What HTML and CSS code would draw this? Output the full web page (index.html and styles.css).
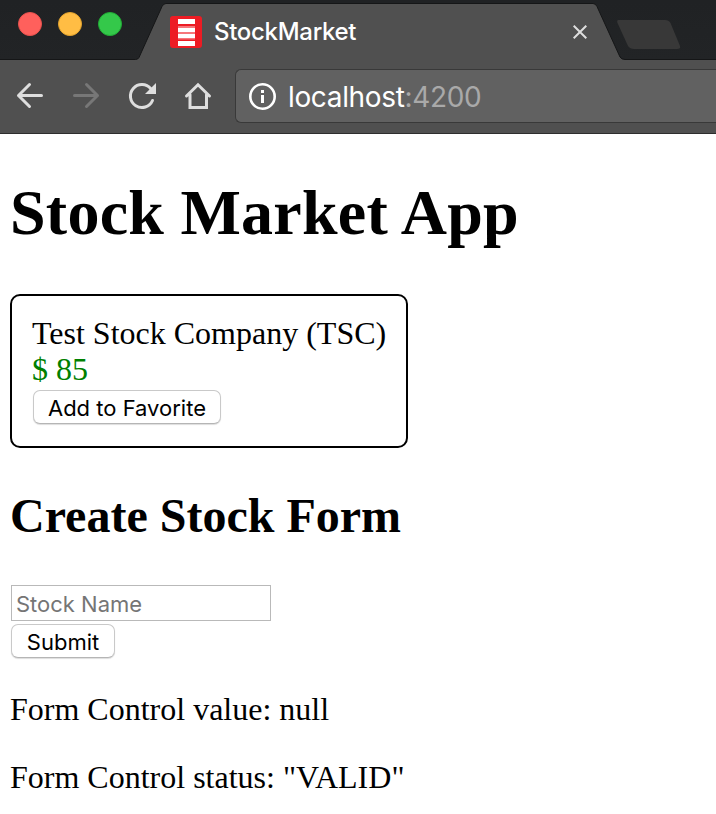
FILE: index.html
```html
<!DOCTYPE html>
<html lang="en">
<head>
<meta charset="utf-8">
<title>StockMarket</title>
<link rel="stylesheet" href="styles.css">
</head>
<body>
<header class="chrome">
  <div class="tabstrip">
    <svg class="tab-shape" width="716" height="60" viewBox="0 0 716 60" aria-hidden="true">
      <path d="M-1 61V59.500H135.500Q138 59.500 139 57.500L162 6.500Q163.500 3.500 166 3.500H593Q595.500 3.500 597 6.500L620 57Q621.500 59.500 625 59.500H717V61" fill="#505050" stroke="#151617"/>
      <path d="M618.500 20H665Q669 20 670.500 23L680 46Q681 49 677 49H634Q630 49 628 46L617.500 23Q616.500 20 618.500 20Z" fill="#383838"/>
    </svg>
    <div class="lights"><i class="light red"></i><i class="light yellow"></i><i class="light green"></i></div>
    <div class="tab">
      <svg class="favicon" width="32" height="32" viewBox="0 0 32 32"><rect width="32" height="32" rx="3" fill="#ed1c24"/><path fill="#fff" d="M8 3h17v5H8zM8 12h17v4H8zM8 18h17v4H8zM8 25h17v5H8z"/><path fill="#f6777b" d="M8 10h17v2H8zM8 16h17v2H8zM8 22h17v1.500H8z"/></svg>
      <span class="tab-title">StockMarket</span>
      <svg class="close" width="14" height="14" viewBox="0 0 14 14"><path d="M.7.700 13.300 13.300M13.300.700.700 13.300" stroke="#dedede" stroke-width="2"/></svg>
    </div>
  </div>
  <div class="toolbar">
    <svg class="nav" width="235" height="73" viewBox="0 60 235 73" fill="none" stroke="#dedede" stroke-width="3" stroke-linecap="round" stroke-linejoin="round">
      <path d="M41.500 95.500H18.500M29.500 84.500 18.500 95.500 29.500 106.500"/>
      <path stroke="#777" d="M74.500 95.500H97.500M86.500 84.500 97.500 95.500 86.500 106.500"/>
      <path d="M150.800 88.700A11.500 11.500 0 1 0 152.500 100.500"/>
      <path d="M156 83V94H145Z" fill="#dedede" stroke="none"/>
      <path stroke-linejoin="miter" d="M186.500 96 198 84.800 209.500 96M190 94.500V107.500H206.500V94.500"/>
    </svg>
    <div class="address">
      <svg class="info" width="28" height="28" viewBox="0 0 28 28"><circle cx="13.500" cy="13.500" r="12.200" fill="none" stroke="#fff" stroke-width="2.600"/><path fill="#fff" d="M12 7h3v3h-3zM12 12h3v8h-3z"/></svg>
      <span class="url">localhost<span class="port">:4200</span></span>
    </div>
  </div>
</header>
<main class="page">
  <h1>Stock Market App</h1>
  <section class="card">
    <div class="name">Test Stock Company (TSC)</div>
    <div class="price">$ 85</div>
    <button class="btn favorite" type="button">Add to Favorite</button>
  </section>
  <h2>Create Stock Form</h2>
  <form>
    <input class="stock-name" type="text" placeholder="Stock Name">
    <button class="btn submit" type="button">Submit</button>
  </form>
  <p class="value">Form Control value: null</p>
  <p class="status">Form Control status: "VALID"</p>
</main>
</body>
</html>
```
FILE: styles.css
```css
* { box-sizing: border-box; }
body { margin: 0; background: #fff; color: #000; font: 32px/36px "Liberation Serif", serif; overflow: hidden; }
.chrome { height: 134px; background: #505050; font-family: Inter, sans-serif; }
.tabstrip { position: relative; height: 60px; display: flex; background: linear-gradient(#202224, #202224 3px, #222426); }
.tab-shape { position: absolute; left: 0; top: 0; }
.lights { position: relative; display: flex; gap: 16px; width: 170px; padding: 12px 0 0 18px; }
.light { width: 24px; height: 24px; border-radius: 50%; border: 1px solid; }
.red { background: #ff605c; border-color: #e9514d; }
.yellow { background: #ffbd44; border-color: #e3a32c; }
.green { background: #34c84a; border-color: #20ad35; }
.tab { position: relative; display: flex; width: 417px; padding-top: 15px; }
.favicon { margin-top: 1px; }
.tab-title { margin: 1px 0 0 12px; color: #fff; font-size: 24px; font-weight: 500; line-height: 32px; letter-spacing: -.3px; white-space: nowrap; }
.close { margin: 10px 0 0 auto; }
.toolbar { height: 74px; display: flex; border-bottom: 1px solid #2d2d2d; }
.nav { flex: none; width: 235px; }
.address { flex: 1; display: flex; height: 54px; margin-top: 9px; padding: 13px 0 0 13px; background: #616161; border: 1px solid #393939; border-right: 0; border-radius: 6px 0 0 6px; }
.url { margin-left: 11px; color: #fff; font-size: 28px; line-height: 29px; letter-spacing: -.35px; white-space: nowrap; }
.port { color: #a9a9a9; }
.page { padding: 0 10px; }
h1 { margin: 42px 0 44px; font-size: 64px; line-height: 74px; letter-spacing: .25px; white-space: nowrap; }
.card { width: 398px; height: 154px; padding: 19px 20px 20px; border: 2px solid #000; border-radius: 10px; white-space: nowrap; }
.price { color: #008000; }
.btn { display: block; height: 34px; padding: 2px 0 0; border: 1px solid #c9c9c9; border-bottom-color: #b5b5b5; border-radius: 7px; background: #fff; box-shadow: 0 1px 1px #ddd; color: #000; font: 22px/30px Inter, sans-serif; text-align: center; white-space: nowrap; }
.favorite { width: 188px; margin: 3px 0 0 1px; }
h2 { margin: 41px 0 42px; font-size: 48px; line-height: 54px; white-space: nowrap; }
.stock-name { display: block; width: 260px; height: 36px; margin-left: 1px; padding: 2px 4px 0; border: 1px solid #b9b9b9; border-radius: 0; background: #fff; font: 22px Inter, sans-serif; }
.stock-name::placeholder { color: #757575; opacity: 1; }
.submit { width: 104px; margin: 3px 0 0 1px; }
p { margin: 33px 0 0; white-space: nowrap; }
.status { margin-top: 32px; }
```
